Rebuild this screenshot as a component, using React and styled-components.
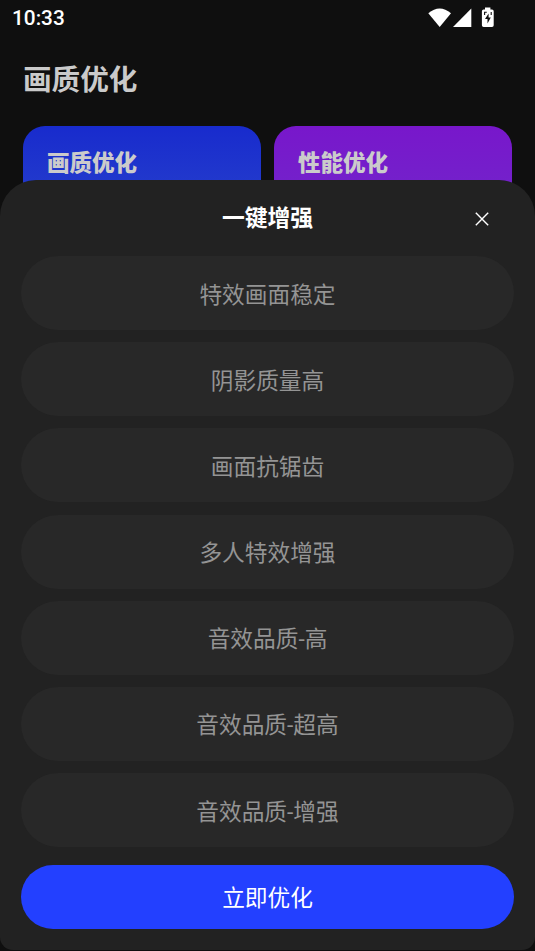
import React from "react";
import styled, { createGlobalStyle } from "styled-components";

const GlobalStyles = createGlobalStyle`
    *,
    *::before,
    *::after {
        box-sizing: border-box;
    }
    body {
        margin: 0;
        background: #0f0f0f;
        font-family: Roboto, "Noto Sans CJK SC", sans-serif;
    }
`;

const ScreenStyles = styled.div`
    display: grid;
    grid-template: 951px / 535px;
    overflow: hidden;
    background: #0f0f0f;
`;

const PageStyles = styled.main`
    grid-area: 1 / 1;
    .heading {
        margin: 21px 0 0;
        padding-left: 23px;
        color: #cacaca;
        font-size: 28.6px;
        line-height: 46px;
        font-weight: 700;
    }
    .cards {
        display: grid;
        grid-template-columns: 238px 238px;
        gap: 13px;
        padding: 23px 23px 0;
    }
`;

const StatusBarStyles = styled.header`
    display: flex;
    justify-content: space-between;
    height: 36px;
    padding: 0 40px 0 12px;
    color: white;
    .time {
        font-size: 20.8px;
        font-weight: 500;
        line-height: 37px;
    }
    .icons {
        display: block;
    }
`;

const CardStyles = styled.section`
    height: 110px;
    padding: 19px 24px;
    border-radius: 22px;
    background: linear-gradient(
        180deg,
        ${(props) => props.$from},
        ${(props) => props.$to}
    );
    color: #cbcbcb;
    font-size: 22.5px;
    line-height: 37px;
    font-weight: 900;
`;

const SheetStyles = styled.section`
    grid-area: 1 / 1;
    z-index: 1;
    display: flex;
    flex-direction: column;
    height: 770px;
    margin-top: 180px;
    padding: 0 21px;
    border-radius: 36px 36px 13px 13px;
    background: #222222;
`;

const SheetHeader = styled.div`
    display: grid;
    grid-template-columns: 64px 1fr 64px;
    align-items: center;
    flex: none;
    height: 76px;
    .title {
        margin: 0;
        padding-top: 2px;
        color: white;
        font-size: 22.8px;
        line-height: 34px;
        font-weight: 700;
        text-align: center;
    }
`;

const CloseButton = styled.button`
    display: grid;
    place-items: center;
    width: 64px;
    height: 64px;
    padding: 1px 0 0;
    border: none;
    background: none;
    color: white;
    cursor: pointer;
`;

const OptionList = styled.div`
    display: flex;
    flex-direction: column;
    gap: 12.2px;
`;

const PillButton = styled.button`
    display: flex;
    align-items: center;
    justify-content: center;
    flex: none;
    width: 493px;
    height: 74px;
    padding: 0;
    border: none;
    border-radius: 37px;
    background: #282828;
    color: #949494;
    font-family: inherit;
    font-size: 22.7px;
    font-weight: 400;
    cursor: pointer;
`;

const SubmitButton = styled(PillButton)`
    height: 64px;
    margin-top: 18px;
    padding-bottom: 1px;
    background: #2340ff;
    color: white;
`;

const options = [
    "特效画面稳定",
    "阴影质量高",
    "画面抗锯齿",
    "多人特效增强",
    "音效品质-高",
    "音效品质-超高",
    "音效品质-增强",
];

const StatusBar = () => {
    return (
        <StatusBarStyles>
            <span className="time">10:33</span>
            <svg className="icons" width="68" height="36" viewBox="427 0 68 36">
                <path
                    d="M428.3 13.2Q439.7 3.8 451 13.2L439.7 27Z"
                    fill="white"
                />
                <path d="M471.3 8.5V27H453Z" fill="white" />
                <path
                    d="M485 7.6h5.4v2H492q1.7 0 1.7 1.7v14q0 1.7-1.7 1.7h-8.4q-1.7 0-1.7-1.7v-14q0-1.7 1.7-1.7H485z"
                    fill="white"
                />
                <path
                    d="M488.6 13.5L485 19h2.5v4.6l3.3-6.2h-2.2z"
                    fill="#0f0f0f"
                />
                <path
                    d="M484.6 15v-2.8h2.2M491.2 12v3"
                    fill="none"
                    stroke="#0f0f0f"
                    strokeWidth="1.1"
                />
            </svg>
        </StatusBarStyles>
    );
};

const App = () => {
    return (
        <>
            <GlobalStyles />
            <ScreenStyles>
                <PageStyles>
                    <StatusBar />
                    <h1 className="heading">画质优化</h1>
                    <div className="cards">
                        <CardStyles $from="#182bcd" $to="#2a45cc">
                            画质优化
                        </CardStyles>
                        <CardStyles $from="#7817cb" $to="#7029cb">
                            性能优化
                        </CardStyles>
                    </div>
                </PageStyles>
                <SheetStyles>
                    <SheetHeader>
                        <span />
                        <h2 className="title">一键增强</h2>
                        <CloseButton aria-label="关闭">
                            <svg width="14" height="14" viewBox="0 0 14 14">
                                <path
                                    d="M.8.8l12.4 12.4M13.2.8L.8 13.2"
                                    stroke="currentColor"
                                    strokeWidth="1.4"
                                />
                            </svg>
                        </CloseButton>
                    </SheetHeader>
                    <OptionList>
                        {options.map((option) => (
                            <PillButton key={option}>{option}</PillButton>
                        ))}
                    </OptionList>
                    <SubmitButton>立即优化</SubmitButton>
                </SheetStyles>
            </ScreenStyles>
        </>
    );
};

export default App;
